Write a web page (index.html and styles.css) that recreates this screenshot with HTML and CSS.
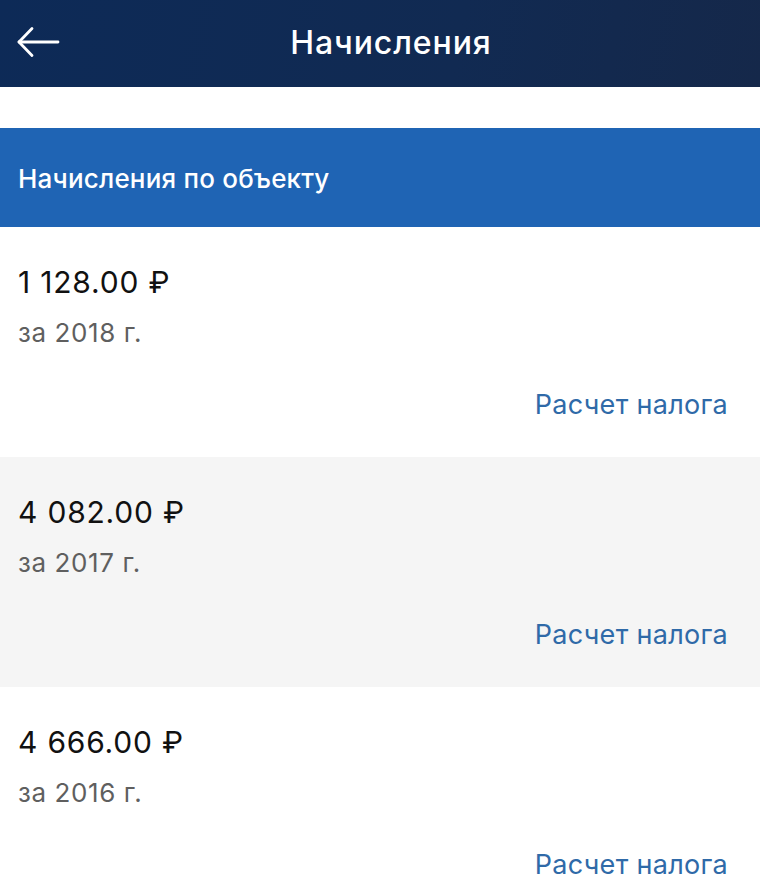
FILE: index.html
```html
<!DOCTYPE html>
<html lang="ru">
<head>
<meta charset="utf-8">
<title>Начисления</title>
<link rel="stylesheet" href="styles.css">
</head>
<body>
<header class="topbar">
  <button class="back" aria-label="Назад">
    <svg width="44" height="32" viewBox="0 0 44 32" fill="none" stroke="#fff" stroke-width="2.8" stroke-linecap="round" stroke-linejoin="round">
      <path d="M42 16H3"/>
      <path d="M16 2.5L3 16L16 29.5"/>
    </svg>
  </button>
  <h1 class="title">Начисления</h1>
</header>
<div class="spacer"></div>
<section class="section">
  <div class="section-head">Начисления по объекту</div>
  <div class="item">
    <div class="amount">1 128.00 ₽</div>
    <div class="year">за 2018 г.</div>
    <a class="link" href="#">Расчет налога</a>
  </div>
  <div class="item item-alt">
    <div class="amount">4 082.00 ₽</div>
    <div class="year">за 2017 г.</div>
    <a class="link" href="#">Расчет налога</a>
  </div>
  <div class="item">
    <div class="amount">4 666.00 ₽</div>
    <div class="year">за 2016 г.</div>
    <a class="link" href="#">Расчет налога</a>
  </div>
</section>
</body>
</html>
```
FILE: styles.css
```css
html, body {
  margin: 0;
  padding: 0;
  background: #fff;
  font-family: "Inter", "Roboto", "Liberation Sans", sans-serif;
  overflow: hidden;
}
.topbar {
  height: 87px;
  background: linear-gradient(100deg, #0d2a57 0%, #112a52 60%, #15284a 100%);
  display: flex;
  align-items: center;
  justify-content: center;
  position: relative;
}
.back {
  position: absolute;
  left: 16px;
  top: 26px;
  background: none;
  border: 0;
  padding: 0;
  display: flex;
}
.title {
  margin: 0 0 0 22px;
  color: #fff;
  font-size: 32px;
  font-weight: 500;
  letter-spacing: 0.9px;
  padding-bottom: 2px;
}
.spacer {
  height: 41px;
}
.section-head {
  height: 99px;
  background: #1f64b4;
  color: #fff;
  font-size: 26px;
  font-weight: 500;
  letter-spacing: 0.2px;
  display: flex;
  align-items: center;
  padding: 0 18px;
  padding-top: 2px;
  box-sizing: border-box;
}
.item {
  height: 230px;
  box-sizing: border-box;
  padding: 36px 32px 0 18px;
  display: flex;
  flex-direction: column;
}
.item-alt {
  background: #f5f5f5;
}
.amount {
  font-size: 30px;
  color: #111;
  line-height: 38px;
  letter-spacing: 0.8px;
}
.year {
  font-size: 26px;
  color: #5f5f5f;
  line-height: 34px;
  margin-top: 15px;
  letter-spacing: 0.6px;
}
.link {
  align-self: flex-end;
  font-size: 27px;
  color: #2f6aa8;
  text-decoration: none;
  line-height: 34px;
  margin-top: 38px;
  letter-spacing: 0.3px;
}
```
